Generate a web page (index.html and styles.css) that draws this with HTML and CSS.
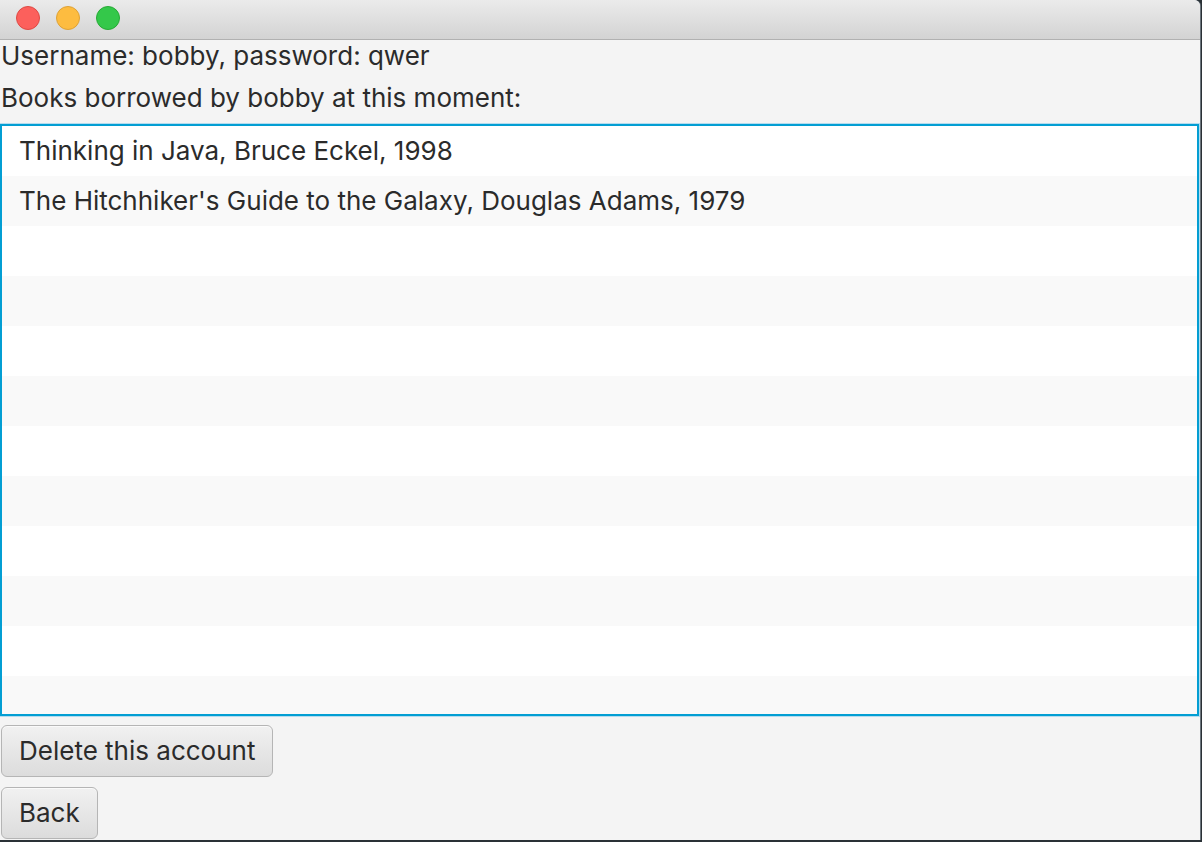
FILE: index.html
```html
<!DOCTYPE html>
<html>
<head>
<meta charset="utf-8">
<title>Account</title>
<link rel="stylesheet" href="styles.css">
</head>
<body>
<div class="window">
  <div class="titlebar">
    <span class="light red"></span>
    <span class="light yellow"></span>
    <span class="light green"></span>
  </div>
  <div class="content">
    <div class="label">Username: bobby, password: qwer</div>
    <div class="label">Books borrowed by bobby at this moment:</div>
    <div class="list">
      <div class="row">Thinking in Java, Bruce Eckel, 1998</div>
      <div class="row">The Hitchhiker's Guide to the Galaxy, Douglas Adams, 1979</div>
      <div class="row"></div>
      <div class="row"></div>
      <div class="row"></div>
      <div class="row"></div>
      <div class="row"></div>
      <div class="row"></div>
      <div class="row"></div>
      <div class="row"></div>
      <div class="row"></div>
      <div class="row"></div>
    </div>
    <div class="buttons">
      <button class="btn">Delete this account</button>
      <button class="btn">Back</button>
    </div>
  </div>
</div>
</body>
</html>
```
FILE: styles.css
```css
html, body {
  margin: 0;
  padding: 0;
}
body {
  width: 1202px;
  height: 842px;
  overflow: hidden;
  background: #2a3136;
  font-family: "Inter", "Liberation Sans", sans-serif;
  font-size: 26px;
  color: #2b2b2b;
}
.window {
  width: 1200px;
  height: 840px;
  background: #f4f4f4;
  border-top-right-radius: 6px;
  box-shadow: 1px 0 0 #6b747c;
  overflow: hidden;
  display: flex;
  flex-direction: column;
}
.titlebar {
  flex: none;
  height: 40px;
  box-sizing: border-box;
  border-bottom: 1px solid #b1b1b1;
  background: linear-gradient(#ebebeb, #d3d3d3);
  display: flex;
  align-items: flex-start;
  gap: 16px;
  padding: 6px 0 0 16px;
}
.light {
  width: 24px;
  height: 24px;
  border-radius: 50%;
  box-sizing: border-box;
}
.red { background: #fc605c; border: 1px solid #de4a44; }
.yellow { background: #fdbc40; border: 1px solid #dea236; }
.green { background: #34c84a; border: 1px solid #27aa35; }
.content {
  display: flex;
  flex-direction: column;
  gap: 10px;
}
.label {
  line-height: 32px;
  height: 32px;
  padding-left: 1px;
  white-space: nowrap;
}
.list {
  width: 1199px;
  height: 592px;
  box-sizing: border-box;
  border: 2px solid #039ed3;
  box-shadow: 0 0 0 1px #b4dcef;
  background: #ffffff;
  overflow: hidden;
  flex: none;
  margin-bottom: -1px;
}
.row {
  height: 50px;
  line-height: 50px;
  padding-left: 17px;
  white-space: nowrap;
  background: #ffffff;
}
.row:nth-child(even) {
  background: #f9f9f9;
}
.buttons {
  display: flex;
  flex-direction: column;
  align-items: flex-start;
  gap: 10px;
  padding-left: 1px;
}
.btn {
  font-family: inherit;
  font-size: 26px;
  color: #2b2b2b;
  height: 52px;
  line-height: 50px;
  padding: 0 17px;
  margin: 0;
  border: 1px solid #b5b5b5;
  border-radius: 6px;
  background: linear-gradient(#f1f1f1, #dcdcdc);
  box-shadow: inset 0 1px 0 #fafafa;
  cursor: default;
}
```
